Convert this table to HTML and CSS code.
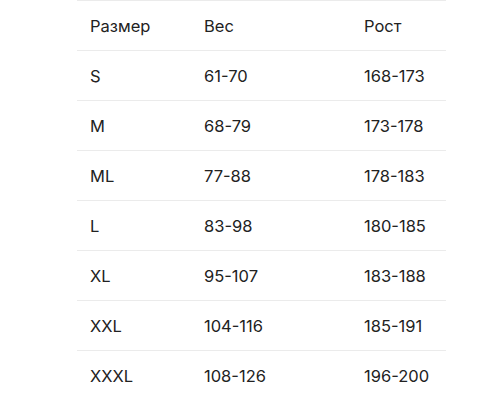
FILE: index.html
```html
<!DOCTYPE html>
<html lang="ru">
<head>
<meta charset="utf-8">
<link rel="stylesheet" href="styles.css">
</head>
<body>
<table class="sizes">
  <colgroup><col class="c1"><col class="c2"><col class="c3"></colgroup>
  <thead>
    <tr><th>Размер</th><th>Вес</th><th>Рост</th></tr>
  </thead>
  <tbody>
    <tr><td>S</td><td>61-70</td><td>168-173</td></tr>
    <tr><td>M</td><td>68-79</td><td>173-178</td></tr>
    <tr><td>ML</td><td>77-88</td><td>178-183</td></tr>
    <tr><td>L</td><td>83-98</td><td>180-185</td></tr>
    <tr><td>XL</td><td>95-107</td><td>183-188</td></tr>
    <tr><td>XXL</td><td>104-116</td><td>185-191</td></tr>
    <tr><td>XXXL</td><td>108-126</td><td>196-200</td></tr>
  </tbody>
</table>
</body>
</html>
```
FILE: styles.css
```css
html, body {
  margin: 0;
  padding: 0;
  background: #fff;
}
body {
  padding-left: 77px;
  padding-top: 0;
}
.sizes {
  width: 369px;
  border-collapse: collapse;
  table-layout: fixed;
  font-family: Inter, "Noto Sans", sans-serif;
  font-size: 16.5px;
  color: #222;
}
.c1 { width: 114px; }
.c2 { width: 160px; }
.c3 { width: 95px; }
.sizes th,
.sizes td {
  height: 50px;
  padding: 1px 0 0 13px;
  text-align: left;
  font-weight: 400;
  border-top: 1px solid #ebebeb;
  vertical-align: middle;
  box-sizing: border-box;
}
```
